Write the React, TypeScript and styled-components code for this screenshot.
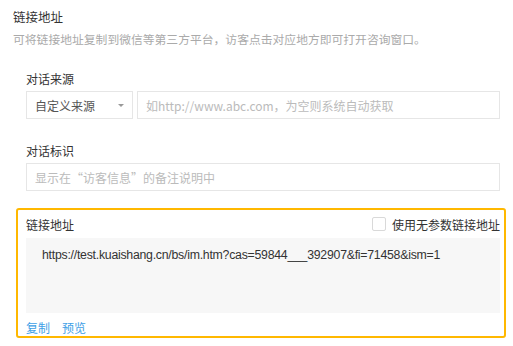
import { createGlobalStyle } from 'styled-components';
import styled from 'styled-components';

const GlobalStyle = createGlobalStyle`
  html, body {
    margin: 0;
    padding: 0;
    background: #ffffff;
    font-family: "Noto Sans CJK SC", "Noto Sans", "Liberation Sans", sans-serif;
  }
`;

const Page = styled.div`
  width: 513px;
  height: 346px;
  padding: 7px 0 0 13px;
  box-sizing: border-box;
  overflow: hidden;
`;

const Title = styled.div`
  font-size: 12.5px;
  line-height: 20px;
  color: #333333;
`;

const Desc = styled.div`
  margin-top: 2px;
  font-size: 11.8px;
  line-height: 20px;
  color: #aaaaaa;
`;

const Form = styled.div`
  padding: 0 0 0 13px;
  width: 474px;
`;

const Label = styled.div<{ $top: number }>`
  margin-top: ${(p) => p.$top}px;
  font-size: 12px;
  line-height: 20px;
  color: #333333;
`;

const Row = styled.div`
  display: flex;
  gap: 4px;
  margin-top: 2px;
`;

const Select = styled.div`
  width: 107px;
  height: 28px;
  box-sizing: border-box;
  border: 1px solid #e6e6e6;
  display: flex;
  align-items: center;
  justify-content: space-between;
  padding: 0 8px 0 8px;
  font-size: 12px;
  color: #555555;
`;

const Caret = styled.span`
  width: 0;
  height: 0;
  border-left: 3px solid transparent;
  border-right: 3px solid transparent;
  border-top: 3px solid #999999;
`;

const Input = styled.input`
  flex: 1;
  min-width: 0;
  height: 28px;
  box-sizing: border-box;
  border: 1px solid #e6e6e6;
  padding: 0 8px;
  font-family: inherit;
  font-size: 12px;
  color: #333333;
  outline: none;
  &::placeholder {
    color: #bbbbbb;
  }
`;

const LinkBox = styled.div`
  margin: 17px 0 0 3px;
  width: 490px;
  height: 130px;
  box-sizing: border-box;
  border: 2px solid #ffb800;
  border-radius: 3px;
  padding: 3px 4px 0 8px;
`;

const BoxHead = styled.div`
  display: flex;
  align-items: center;
  justify-content: space-between;
  height: 22px;
  font-size: 12px;
  color: #333333;
`;

const CheckLabel = styled.label`
  display: flex;
  align-items: center;
  gap: 6px;
  font-size: 12px;
  color: #333333;
`;

const CheckBox = styled.span`
  width: 12px;
  height: 12px;
  border: 1px solid #d9d9d9;
  border-radius: 2px;
  background: #ffffff;
`;

const UrlArea = styled.div`
  margin-top: 3px;
  height: 75px;
  background: #f7f7f7;
  padding: 8px 16px;
  box-sizing: border-box;
  font-size: 12.3px;
  letter-spacing: -0.25px;
  line-height: 18px;
  white-space: nowrap;
  overflow: hidden;
  color: #333333;
  font-family: "Liberation Sans", "Noto Sans CJK SC", sans-serif;
`;

const Actions = styled.div`
  display: flex;
  gap: 12px;
  margin-top: 5px;
  font-size: 12px;
  line-height: 20px;
`;

const ActionLink = styled.a`
  color: #3e9fe6;
  text-decoration: none;
  cursor: pointer;
`;

const App = () => {
  return (
    <Page>
      <GlobalStyle />
      <Title>链接地址</Title>
      <Desc>可将链接地址复制到微信等第三方平台，访客点击对应地方即可打开咨询窗口。</Desc>
      <Form>
        <Label $top={20}>对话来源</Label>
        <Row>
          <Select>
            <span>自定义来源</span>
            <Caret />
          </Select>
          <Input placeholder="如http://www.abc.com，为空则系统自动获取" />
        </Row>
        <Label $top={22}>对话标识</Label>
        <Row>
          <Input placeholder="显示在“访客信息”的备注说明中" />
        </Row>
      </Form>
      <LinkBox>
        <BoxHead>
          <span>链接地址</span>
          <CheckLabel>
            <CheckBox />
            使用无参数链接地址
          </CheckLabel>
        </BoxHead>
        <UrlArea>https://test.kuaishang.cn/bs/im.htm?cas=59844___392907&amp;fi=71458&amp;ism=1</UrlArea>
        <Actions>
          <ActionLink>复制</ActionLink>
          <ActionLink>预览</ActionLink>
        </Actions>
      </LinkBox>
    </Page>
  );
};

export default App;
